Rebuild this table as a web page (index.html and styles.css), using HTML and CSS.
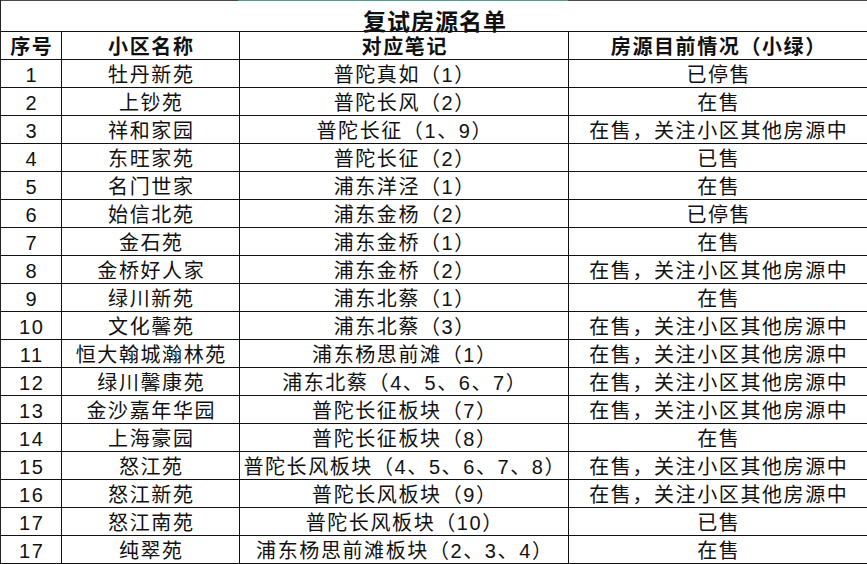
FILE: index.html
```html
<!DOCTYPE html>
<html lang="zh-CN">
<head>
<meta charset="utf-8">
<title>复试房源名单</title>
<link rel="stylesheet" href="styles.css">
</head>
<body>
<div class="sheet">
  <div class="title-row">
    <div class="title-top"><span class="seg-dark a"></span><span class="seg-teal"></span><span class="seg-dark b"></span></div>
    <div class="title">复试房源名单</div>
  </div>
  <div class="grid">
    <div class="c h">序号</div><div class="c h">小区名称</div><div class="c h">对应笔记</div><div class="c h">房源目前情况（小绿）</div>
    <div class="c">1</div><div class="c">牡丹新苑</div><div class="c">普陀真如（1）</div><div class="c">已停售</div>
    <div class="c">2</div><div class="c">上钞苑</div><div class="c">普陀长风（2）</div><div class="c">在售</div>
    <div class="c">3</div><div class="c">祥和家园</div><div class="c">普陀长征（1、9）</div><div class="c">在售，关注小区其他房源中</div>
    <div class="c">4</div><div class="c">东旺家苑</div><div class="c">普陀长征（2）</div><div class="c">已售</div>
    <div class="c">5</div><div class="c">名门世家</div><div class="c">浦东洋泾（1）</div><div class="c">在售</div>
    <div class="c">6</div><div class="c">始信北苑</div><div class="c">浦东金杨（2）</div><div class="c">已停售</div>
    <div class="c">7</div><div class="c">金石苑</div><div class="c">浦东金桥（1）</div><div class="c">在售</div>
    <div class="c">8</div><div class="c">金桥好人家</div><div class="c">浦东金桥（2）</div><div class="c">在售，关注小区其他房源中</div>
    <div class="c">9</div><div class="c">绿川新苑</div><div class="c">浦东北蔡（1）</div><div class="c">在售</div>
    <div class="c">10</div><div class="c">文化馨苑</div><div class="c">浦东北蔡（3）</div><div class="c">在售，关注小区其他房源中</div>
    <div class="c">11</div><div class="c">恒大翰城瀚林苑</div><div class="c">浦东杨思前滩（1）</div><div class="c">在售，关注小区其他房源中</div>
    <div class="c">12</div><div class="c">绿川馨康苑</div><div class="c">浦东北蔡（4、5、6、7）</div><div class="c">在售，关注小区其他房源中</div>
    <div class="c">13</div><div class="c">金沙嘉年华园</div><div class="c">普陀长征板块（7）</div><div class="c">在售，关注小区其他房源中</div>
    <div class="c">14</div><div class="c">上海豪园</div><div class="c">普陀长征板块（8）</div><div class="c">在售</div>
    <div class="c">15</div><div class="c">怒江苑</div><div class="c">普陀长风板块（4、5、6、7、8）</div><div class="c">在售，关注小区其他房源中</div>
    <div class="c">16</div><div class="c">怒江新苑</div><div class="c">普陀长风板块（9）</div><div class="c">在售，关注小区其他房源中</div>
    <div class="c">17</div><div class="c">怒江南苑</div><div class="c">普陀长风板块（10）</div><div class="c">已售</div>
    <div class="c">17</div><div class="c">纯翠苑</div><div class="c">浦东杨思前滩板块（2、3、4）</div><div class="c">在售</div>
  </div>
</div>
</body>
</html>
```
FILE: styles.css
```css
* { box-sizing: border-box; }
html, body { margin: 0; padding: 0; background: #fff; }
body {
  width: 867px;
  height: 564px;
  overflow: hidden;
  font-family: "Liberation Sans", "Noto Sans CJK SC", sans-serif;
  color: #111;
}
.sheet {
  width: 867px;
  border-left: 1px solid #222;
}
.title-row {
  height: 32px;
  border-bottom: 1px solid #111;
  display: flex;
  flex-direction: column;
}
.title-top {
  display: flex;
  height: 1px;
}
.seg-dark { background: #4a4a4a; height: 1px; }
.seg-dark.a { width: 237px; }
.seg-teal { background: #4f9f88; width: 330px; height: 1px; }
.seg-dark.b { flex: 1; }
.title {
  flex: 1;
  display: flex;
  align-items: center;
  justify-content: center;
  font-size: 23px;
  font-weight: bold;
  letter-spacing: 1px;
  padding-top: 2px;
  padding-left: 2px;
}
.grid {
  display: grid;
  grid-template-columns: 61px 178px 329px 298px;
  grid-auto-rows: 28px;
}
.c {
  border-right: 1px solid #111;
  border-bottom: 1px solid #111;
  display: flex;
  align-items: center;
  justify-content: center;
  font-size: 20px;
  letter-spacing: 1.6px;
  white-space: nowrap;
  padding-top: 2px;
  padding-left: 1.6px;
  line-height: 1;
}
.c:nth-child(4n) { border-right: none; }
.c.h { font-weight: bold; }
```
